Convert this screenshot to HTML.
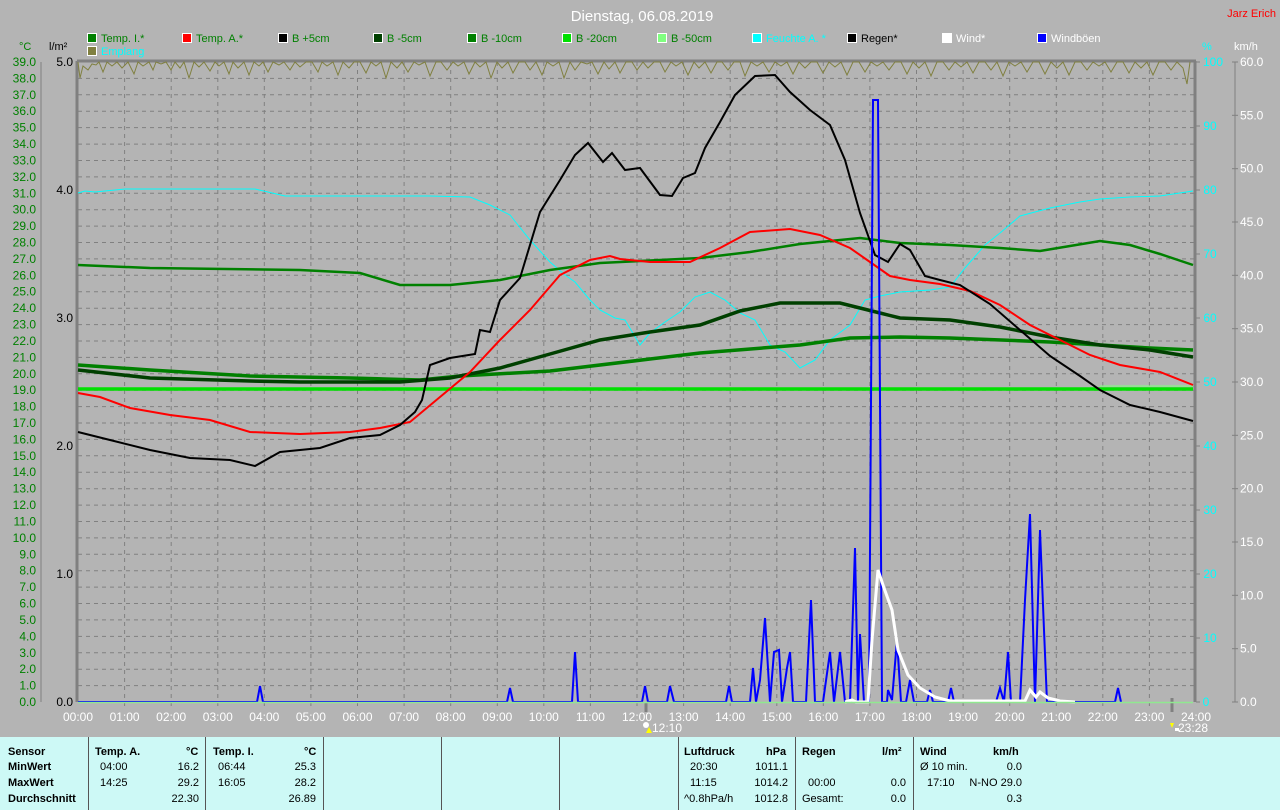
<!DOCTYPE html>
<html><head><meta charset="utf-8"><style>
html,body{margin:0;padding:0;width:1280px;height:810px;overflow:hidden;background:#b4b4b4;font-family:"Liberation Sans",sans-serif}
svg{position:absolute;left:0;top:0}
.tbl{position:absolute;left:0;top:737px;width:1280px;height:73px;background:#cdf9f6;font-size:11px;color:#000}
.tbl div{position:absolute;white-space:nowrap}
.sep{top:0;width:1px;height:73px;background:#555}
.b{font-weight:bold}
</style></head><body>
<svg width="1280" height="737" viewBox="0 0 1280 737" font-family="Liberation Sans, sans-serif">
<text x="642" y="21" fill="#fff" font-size="15" text-anchor="middle">Dienstag, 06.08.2019</text>
<text x="1276" y="17" fill="#f00" font-size="11" text-anchor="end">Jarz Erich</text>
<g font-size="11">
<rect x="87.5" y="33.5" width="9" height="9" fill="#008000" stroke="#fff"/><text x="101" y="42" fill="#008000">Temp. I.*</text>
<rect x="182.5" y="33.5" width="9" height="9" fill="#f00" stroke="#fff"/><text x="196" y="42" fill="#008000">Temp. A.*</text>
<rect x="278.5" y="33.5" width="9" height="9" fill="#000" stroke="#fff"/><text x="292" y="42" fill="#008000">B +5cm</text>
<rect x="373.5" y="33.5" width="9" height="9" fill="#004000" stroke="#fff"/><text x="387" y="42" fill="#008000">B -5cm</text>
<rect x="467.5" y="33.5" width="9" height="9" fill="#008000" stroke="#fff"/><text x="481" y="42" fill="#008000">B -10cm</text>
<rect x="562.5" y="33.5" width="9" height="9" fill="#00e000" stroke="#fff"/><text x="576" y="42" fill="#008000">B -20cm</text>
<rect x="657.5" y="33.5" width="9" height="9" fill="#80ff80" stroke="#fff"/><text x="671" y="42" fill="#008000">B -50cm</text>
<rect x="752.5" y="33.5" width="9" height="9" fill="#0ff" stroke="#fff"/><text x="766" y="42" fill="#0ff">Feuchte A. *</text>
<rect x="847.5" y="33.5" width="9" height="9" fill="#000" stroke="#fff"/><text x="861" y="42" fill="#000">Regen*</text>
<rect x="942.5" y="33.5" width="9" height="9" fill="#fff" stroke="#fff"/><text x="956" y="42" fill="#fff">Wind*</text>
<rect x="1037.5" y="33.5" width="9" height="9" fill="#00f" stroke="#fff"/><text x="1051" y="42" fill="#fff">Windböen</text>
<rect x="87.5" y="46.5" width="9" height="9" fill="#808040" stroke="#fff"/><text x="101" y="55" fill="#0ff">Emplang</text>
<text x="19" y="50" fill="#008000">°C</text><text x="49" y="50" fill="#000">l/m²</text>
<text x="1202" y="50" fill="#0ff">%</text><text x="1234" y="50" fill="#fff">km/h</text>
</g>
<!-- grid -->
<g stroke="#808080" stroke-dasharray="4,4" stroke-width="1">
<line x1="78" x2="1196" y1="78.4" y2="78.4"/><line x1="78" x2="1196" y1="94.8" y2="94.8"/><line x1="78" x2="1196" y1="111.2" y2="111.2"/><line x1="78" x2="1196" y1="127.6" y2="127.6"/><line x1="78" x2="1196" y1="144.1" y2="144.1"/><line x1="78" x2="1196" y1="160.5" y2="160.5"/><line x1="78" x2="1196" y1="176.9" y2="176.9"/><line x1="78" x2="1196" y1="193.3" y2="193.3"/><line x1="78" x2="1196" y1="209.7" y2="209.7"/><line x1="78" x2="1196" y1="226.1" y2="226.1"/><line x1="78" x2="1196" y1="242.5" y2="242.5"/><line x1="78" x2="1196" y1="258.9" y2="258.9"/><line x1="78" x2="1196" y1="275.3" y2="275.3"/><line x1="78" x2="1196" y1="291.7" y2="291.7"/><line x1="78" x2="1196" y1="308.2" y2="308.2"/><line x1="78" x2="1196" y1="324.6" y2="324.6"/><line x1="78" x2="1196" y1="341" y2="341"/><line x1="78" x2="1196" y1="357.4" y2="357.4"/><line x1="78" x2="1196" y1="373.8" y2="373.8"/><line x1="78" x2="1196" y1="390.2" y2="390.2"/><line x1="78" x2="1196" y1="406.6" y2="406.6"/><line x1="78" x2="1196" y1="423" y2="423"/><line x1="78" x2="1196" y1="439.4" y2="439.4"/><line x1="78" x2="1196" y1="455.8" y2="455.8"/><line x1="78" x2="1196" y1="472.2" y2="472.2"/><line x1="78" x2="1196" y1="488.7" y2="488.7"/><line x1="78" x2="1196" y1="505.1" y2="505.1"/><line x1="78" x2="1196" y1="521.5" y2="521.5"/><line x1="78" x2="1196" y1="537.9" y2="537.9"/><line x1="78" x2="1196" y1="554.3" y2="554.3"/><line x1="78" x2="1196" y1="570.7" y2="570.7"/><line x1="78" x2="1196" y1="587.1" y2="587.1"/><line x1="78" x2="1196" y1="603.5" y2="603.5"/><line x1="78" x2="1196" y1="619.9" y2="619.9"/><line x1="78" x2="1196" y1="636.4" y2="636.4"/><line x1="78" x2="1196" y1="652.8" y2="652.8"/><line x1="78" x2="1196" y1="669.2" y2="669.2"/><line x1="78" x2="1196" y1="685.6" y2="685.6"/>
<line y1="62" y2="710" x1="124.6" x2="124.6"/><line y1="62" y2="710" x1="171.2" x2="171.2"/><line y1="62" y2="710" x1="217.8" x2="217.8"/><line y1="62" y2="710" x1="264.3" x2="264.3"/><line y1="62" y2="710" x1="310.9" x2="310.9"/><line y1="62" y2="710" x1="357.5" x2="357.5"/><line y1="62" y2="710" x1="404.1" x2="404.1"/><line y1="62" y2="710" x1="450.7" x2="450.7"/><line y1="62" y2="710" x1="497.3" x2="497.3"/><line y1="62" y2="710" x1="543.8" x2="543.8"/><line y1="62" y2="710" x1="590.4" x2="590.4"/><line y1="62" y2="710" x1="637" x2="637"/><line y1="62" y2="710" x1="683.6" x2="683.6"/><line y1="62" y2="710" x1="730.2" x2="730.2"/><line y1="62" y2="710" x1="776.8" x2="776.8"/><line y1="62" y2="710" x1="823.3" x2="823.3"/><line y1="62" y2="710" x1="869.9" x2="869.9"/><line y1="62" y2="710" x1="916.5" x2="916.5"/><line y1="62" y2="710" x1="963.1" x2="963.1"/><line y1="62" y2="710" x1="1009.7" x2="1009.7"/><line y1="62" y2="710" x1="1056.3" x2="1056.3"/><line y1="62" y2="710" x1="1102.8" x2="1102.8"/><line y1="62" y2="710" x1="1149.4" x2="1149.4"/>
</g>
<g stroke="#808080" stroke-width="3" fill="none">
<line x1="77" y1="61" x2="1196" y2="61"/><line x1="77" y1="61" x2="77" y2="702"/><line x1="1195" y1="61" x2="1195" y2="702"/>
</g>
<g stroke="#808080" stroke-width="1">
<line x1="41" y1="62" x2="41" y2="702"/><line x1="1235" y1="62" x2="1235" y2="702"/>
<line x1="646" y1="702" x2="646" y2="712" stroke-width="3"/><line x1="1172" y1="698" x2="1172" y2="712" stroke-width="3"/>
<line x1="1196" x2="1200" y1="62" y2="62"/><line x1="1196" x2="1200" y1="126" y2="126"/><line x1="1196" x2="1200" y1="190" y2="190"/><line x1="1196" x2="1200" y1="254" y2="254"/><line x1="1196" x2="1200" y1="318" y2="318"/><line x1="1196" x2="1200" y1="382" y2="382"/><line x1="1196" x2="1200" y1="446" y2="446"/><line x1="1196" x2="1200" y1="510" y2="510"/><line x1="1196" x2="1200" y1="574" y2="574"/><line x1="1196" x2="1200" y1="638" y2="638"/><line x1="1196" x2="1200" y1="702" y2="702"/>
</g>
<!-- left axis labels -->
<g font-size="12" fill="#008000" text-anchor="end">
<text x="36" y="66">39.0</text><text x="36" y="82.4">38.0</text><text x="36" y="98.8">37.0</text><text x="36" y="115.2">36.0</text><text x="36" y="131.6">35.0</text><text x="36" y="148.1">34.0</text><text x="36" y="164.5">33.0</text><text x="36" y="180.9">32.0</text><text x="36" y="197.3">31.0</text><text x="36" y="213.7">30.0</text><text x="36" y="230.1">29.0</text><text x="36" y="246.5">28.0</text><text x="36" y="262.9">27.0</text><text x="36" y="279.3">26.0</text><text x="36" y="295.7">25.0</text><text x="36" y="312.2">24.0</text><text x="36" y="328.6">23.0</text><text x="36" y="345">22.0</text><text x="36" y="361.4">21.0</text><text x="36" y="377.8">20.0</text><text x="36" y="394.2">19.0</text><text x="36" y="410.6">18.0</text><text x="36" y="427">17.0</text><text x="36" y="443.4">16.0</text><text x="36" y="459.8">15.0</text><text x="36" y="476.2">14.0</text><text x="36" y="492.7">13.0</text><text x="36" y="509.1">12.0</text><text x="36" y="525.5">11.0</text><text x="36" y="541.9">10.0</text><text x="36" y="558.3">9.0</text><text x="36" y="574.7">8.0</text><text x="36" y="591.1">7.0</text><text x="36" y="607.5">6.0</text><text x="36" y="623.9">5.0</text><text x="36" y="640.4">4.0</text><text x="36" y="656.8">3.0</text><text x="36" y="673.2">2.0</text><text x="36" y="689.6">1.0</text><text x="36" y="706">0.0</text>
</g>
<g font-size="12" fill="#000" text-anchor="end">
<text x="73" y="66">5.0</text><text x="73" y="194">4.0</text><text x="73" y="322">3.0</text><text x="73" y="450">2.0</text><text x="73" y="578">1.0</text><text x="73" y="706">0.0</text>
</g>
<g font-size="12" fill="#0ff" text-anchor="middle">
<text x="1213" y="66">100</text><text x="1210" y="130">90</text><text x="1210" y="194">80</text><text x="1210" y="258">70</text><text x="1210" y="322">60</text><text x="1210" y="386">50</text><text x="1210" y="450">40</text><text x="1210" y="514">30</text><text x="1210" y="578">20</text><text x="1210" y="642">10</text><text x="1206" y="706">0</text>
</g>
<g font-size="12" fill="#fff"><text x="1240" y="66">60.0</text><text x="1240" y="119.3">55.0</text><text x="1240" y="172.7">50.0</text><text x="1240" y="226">45.0</text><text x="1240" y="279.3">40.0</text><text x="1240" y="332.7">35.0</text><text x="1240" y="386">30.0</text><text x="1240" y="439.3">25.0</text><text x="1240" y="492.7">20.0</text><text x="1240" y="546">15.0</text><text x="1240" y="599.3">10.0</text><text x="1240" y="652.7">5.0</text><text x="1240" y="706">0.0</text></g>
<g stroke="#808080"><line x1="1232" x2="1238" y1="62" y2="62"/><line x1="1232" x2="1238" y1="115.3" y2="115.3"/><line x1="1232" x2="1238" y1="168.7" y2="168.7"/><line x1="1232" x2="1238" y1="222" y2="222"/><line x1="1232" x2="1238" y1="275.3" y2="275.3"/><line x1="1232" x2="1238" y1="328.7" y2="328.7"/><line x1="1232" x2="1238" y1="382" y2="382"/><line x1="1232" x2="1238" y1="435.3" y2="435.3"/><line x1="1232" x2="1238" y1="488.7" y2="488.7"/><line x1="1232" x2="1238" y1="542" y2="542"/><line x1="1232" x2="1238" y1="595.3" y2="595.3"/><line x1="1232" x2="1238" y1="648.7" y2="648.7"/><line x1="1232" x2="1238" y1="702" y2="702"/></g>
<g font-size="12" fill="#fff" text-anchor="middle">
<text x="78" y="721">00:00</text><text x="124.6" y="721">01:00</text><text x="171.2" y="721">02:00</text><text x="217.8" y="721">03:00</text><text x="264.3" y="721">04:00</text><text x="310.9" y="721">05:00</text><text x="357.5" y="721">06:00</text><text x="404.1" y="721">07:00</text><text x="450.7" y="721">08:00</text><text x="497.3" y="721">09:00</text><text x="543.8" y="721">10:00</text><text x="590.4" y="721">11:00</text><text x="637" y="721">12:00</text><text x="683.6" y="721">13:00</text><text x="730.2" y="721">14:00</text><text x="776.8" y="721">15:00</text><text x="823.3" y="721">16:00</text><text x="869.9" y="721">17:00</text><text x="916.5" y="721">18:00</text><text x="963.1" y="721">19:00</text><text x="1009.7" y="721">20:00</text><text x="1056.3" y="721">21:00</text><text x="1102.8" y="721">22:00</text><text x="1149.4" y="721">23:00</text><text x="1196" y="721">24:00</text>
<text x="667" y="732">12:10</text><text x="1193" y="732">23:28</text>
</g>
<circle cx="646" cy="725" r="3" fill="#fff"/><path d="M649 727 l-3 6 h6 z" fill="#ff0"/>
<path d="M1170 723 l2 5 l2 -5 z" fill="#ff0"/><rect x="1175" y="728" width="4" height="3" fill="#fff"/>
<!-- curves -->
<polyline fill="none" stroke="#808040" stroke-width="1" points="78,62 80,78 83,66 88,70 92,64 96,65 99,62 103,72 107,62 112,66 117,62 122,68 128,62 134,74 138,62 143,66 149,62 153,70 156,62 161,64 166,62 171,70 175,62 180,68 184,62 189,78 194,62 199,67 204,62 210,71 215,62 219,66 224,62 229,74 233,62 238,68 244,62 249,75 254,62 259,66 263,62 268,72 273,62 279,65 284,62 290,70 295,62 300,67 306,62 312,62 318,72 322,62 327,66 333,62 338,75 343,62 349,68 354,62 360,62 366,73 371,62 376,66 381,62 386,78 391,62 397,68 402,62 408,72 414,62 419,65 425,62 430,76 436,62 441,62 447,70 453,62 458,66 464,62 469,74 475,62 480,67 486,62 491,78 497,62 502,68 508,62 513,73 519,62 525,62 530,70 536,62 542,75 547,62 553,66 559,62 564,78 570,62 575,70 581,62 587,64 592,62 598,74 604,62 609,69 615,62 620,73 626,62 632,62 637,70 643,62 648,68 654,62 660,62 665,72 671,62 676,66 682,62 688,75 694,62 699,68 705,62 711,73 717,62 722,62 728,70 734,62 740,62 745,76 751,62 757,66 763,62 769,72 775,62 781,66 787,62 793,74 799,62 805,68 811,62 817,62 823,73 829,62 835,67 841,62 847,75 853,62 859,62 865,72 871,62 877,66 883,62 889,70 895,62 901,62 907,74 913,62 919,68 925,62 931,76 937,62 943,62 949,70 955,62 961,67 967,62 973,73 979,62 985,62 991,70 997,62 1003,76 1009,62 1015,66 1021,62 1027,72 1033,62 1039,62 1045,74 1051,62 1057,68 1063,62 1069,75 1075,62 1081,62 1087,70 1093,62 1099,66 1105,62 1111,72 1117,62 1123,62 1129,73 1135,62 1141,68 1147,62 1153,75 1159,62 1165,62 1171,70 1177,62 1183,68 1187,84 1190,62"/>
<polyline fill="none" stroke="#0ff" stroke-width="1" points="78,193 85,191 95,192 105,191 125,189 255,189 285,196 430,196 470,197 490,205 510,215 530,240 550,262 565,275 575,282 590,300 600,310 615,318 625,320 640,345 650,333 665,322 680,312 695,297 710,292 725,300 740,313 755,320 770,345 785,352 800,368 815,360 830,340 850,325 865,300 880,296 900,292 930,290 950,287 965,268 985,245 1000,233 1020,216 1050,208 1080,202 1100,199 1130,197 1160,196 1193,191"/>
<polyline fill="none" stroke="#008000" stroke-width="2.5" points="78,265 150,268 300,270 360,273 400,285 450,285 500,280 550,270 600,263 700,258 750,252 800,244 860,238 900,243 950,245 1000,248 1040,251 1070,246 1100,241 1130,245 1160,254 1193,265"/>
<polyline fill="none" stroke="#00e000" stroke-width="3.5" points="78,389 1193,389"/>
<polyline fill="none" stroke="#80ff80" stroke-width="1" points="1100,386 1193,386"/>
<polyline fill="none" stroke="#008000" stroke-width="3.5" points="78,365 150,370 250,376 350,378 420,380 460,376 550,371 650,359 700,353 800,345 850,338 900,337 950,338 1050,342 1100,345 1150,348 1193,350"/>
<polyline fill="none" stroke="#004000" stroke-width="3.5" points="78,370 150,378 250,381 300,382 400,382 450,378 500,368 550,354 600,340 650,332 700,325 740,311 780,303 840,303 880,313 900,318 950,320 1000,327 1050,337 1100,345 1150,350 1193,357"/>
<polyline fill="none" stroke="#f00" stroke-width="2" points="78,393 100,397 130,408 170,415 210,420 250,432 300,434 350,432 380,428 410,422 440,397 470,372 500,340 530,310 560,275 590,260 610,256 620,259 650,262 690,262 720,248 750,232 790,229 820,235 850,248 870,262 890,276 910,280 940,284 970,291 1000,305 1030,325 1060,340 1090,355 1120,365 1160,372 1193,385"/>
<polyline fill="none" stroke="#000" stroke-width="2" points="78,432 110,440 150,450 190,458 230,460 255,466 280,452 320,448 350,438 380,435 400,425 415,412 422,400 430,365 450,358 475,354 480,330 490,332 500,300 520,278 540,212 560,180 575,155 588,143 603,162 612,153 625,170 640,168 660,195 672,196 683,178 695,173 705,148 720,122 735,95 755,76 775,75 790,92 810,110 830,125 845,160 860,213 875,255 888,262 900,244 910,250 925,276 940,280 960,285 990,304 1020,330 1050,356 1080,376 1100,390 1130,405 1160,412 1193,421"/>
<polyline fill="none" stroke="#00f" stroke-width="2" points="78,702 257,702 260,686 263,702 507,702 510,688 513,702 572,702 575,652 578,702 642,702 645,686 648,702 667,702 670,686 674,702 726,702 729,686 732,702 750,702 753,668 756,702 760,680 765,618 770,702 774,652 779,650 782,702 787,668 790,652 793,702 806,702 811,600 815,702 823,702 830,652 834,702 840,652 845,702 850,702 855,548 858,702 860,634 864,702 869,702 873,100 878,100 882,702 887,702 888,690 892,700 897,640 901,702 906,702 910,680 914,702 927,702 930,690 933,702 948,702 951,688 954,702 996,702 1000,688 1004,702 1008,652 1011,702 1020,702 1025,600 1030,514 1035,702 1040,530 1044,630 1047,702 1115,702 1118,688 1121,702"/>
<polyline fill="none" stroke="#fff" stroke-width="3" points="845,702 852,700 856,702 868,702 872,640 878,570 884,588 892,610 898,650 908,675 920,688 935,697 950,701 1025,701 1030,690 1036,697 1040,692 1048,698 1060,701 1075,702"/>
<line x1="78" y1="702.5" x2="1193" y2="702.5" stroke="#90e890" stroke-width="1.5"/>
</svg>
<div class="tbl">
<div class="sep" style="left:88px"></div><div class="sep" style="left:205px"></div><div class="sep" style="left:323px"></div><div class="sep" style="left:441px"></div><div class="sep" style="left:559px"></div><div class="sep" style="left:678px"></div><div class="sep" style="left:795px"></div><div class="sep" style="left:913px"></div>
<div class="b" style="left:8px;top:9px">Sensor</div><div class="b" style="left:8px;top:24px">MinWert</div><div class="b" style="left:8px;top:40px">MaxWert</div><div class="b" style="left:8px;top:56px">Durchschnitt</div>
<div class="b" style="left:95px;top:9px">Temp. A.</div><div class="b" style="left:186px;top:9px">°C</div>
<div style="left:100px;top:24px">04:00</div><div style="right:1081px;top:24px">16.2</div>
<div style="left:100px;top:40px">14:25</div><div style="right:1081px;top:40px">29.2</div>
<div style="right:1081px;top:56px">22.30</div>
<div class="b" style="left:213px;top:9px">Temp. I.</div><div class="b" style="left:304px;top:9px">°C</div>
<div style="left:218px;top:24px">06:44</div><div style="right:964px;top:24px">25.3</div>
<div style="left:218px;top:40px">16:05</div><div style="right:964px;top:40px">28.2</div>
<div style="right:964px;top:56px">26.89</div>
<div class="b" style="left:684px;top:9px">Luftdruck</div><div class="b" style="left:766px;top:9px">hPa</div>
<div style="left:690px;top:24px">20:30</div><div style="right:492px;top:24px">1011.1</div>
<div style="left:690px;top:40px">11:15</div><div style="right:492px;top:40px">1014.2</div>
<div style="left:684px;top:56px">^0.8hPa/h</div><div style="right:492px;top:56px">1012.8</div>
<div class="b" style="left:802px;top:9px">Regen</div><div class="b" style="left:882px;top:9px">l/m²</div>
<div style="left:808px;top:40px">00:00</div><div style="right:374px;top:40px">0.0</div>
<div style="left:802px;top:56px">Gesamt:</div><div style="right:374px;top:56px">0.0</div>
<div class="b" style="left:920px;top:9px">Wind</div><div class="b" style="left:993px;top:9px">km/h</div>
<div style="left:920px;top:24px">Ø 10 min.</div><div style="right:258px;top:24px">0.0</div>
<div style="left:927px;top:40px">17:10</div><div style="right:258px;top:40px">N-NO 29.0</div>
<div style="right:258px;top:56px">0.3</div>
</div>
</body></html>
